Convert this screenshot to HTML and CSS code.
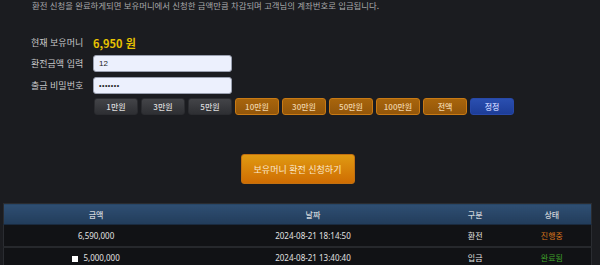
FILE: index.html
```html
<!DOCTYPE html>
<html lang="ko">
<head>
<meta charset="utf-8">
<link rel="stylesheet" href="styles.css">
</head>
<body>
<div class="page">
  <p class="notice">환전 신청을 완료하게되면 보유머니에서 신청한 금액만큼 차감되며 고객님의 계좌번호로 입금됩니다.</p>

  <div class="form">
    <div class="row balance-row">
      <span class="label">현재 보유머니</span>
      <span class="balance">6,950 원</span>
    </div>
    <div class="row">
      <span class="label">환전금액 입력</span>
      <div class="input">12</div>
    </div>
    <div class="row">
      <span class="label">출금 비밀번호</span>
      <div class="input pw">•••••••</div>
    </div>
    <div class="row">
      <span class="label"></span>
      <div class="chips">
        <button class="chip gray">1만원</button>
        <button class="chip gray">3만원</button>
        <button class="chip gray">5만원</button>
        <button class="chip orange">10만원</button>
        <button class="chip orange">30만원</button>
        <button class="chip orange">50만원</button>
        <button class="chip orange">100만원</button>
        <button class="chip orange">전액</button>
        <button class="chip blue">정정</button>
      </div>
    </div>
  </div>

  <div class="submit-wrap">
    <button class="submit">보유머니 환전 신청하기</button>
  </div>

  <table class="history">
    <colgroup>
      <col class="c1"><col class="c2"><col class="c3"><col class="c4">
    </colgroup>
    <thead>
      <tr><th>금액</th><th>날짜</th><th>구분</th><th>상태</th></tr>
    </thead>
    <tbody>
      <tr><td>6,590,000</td><td>2024-08-21 18:14:50</td><td>환전</td><td class="st-pending">진행중</td></tr>
      <tr><td><span class="check"></span>5,000,000</td><td>2024-08-21 13:40:40</td><td>입금</td><td class="st-done">완료됨</td></tr>
    </tbody>
  </table>
</div>
</body>
</html>
```

FILE: styles.css
```css
* { box-sizing: border-box; }
html, body { margin: 0; padding: 0; }
body {
  background: #1b1c20;
  font-family: "Noto Sans CJK KR", "Noto Sans", sans-serif;
  color: #c8c8c8;
  overflow: hidden;
}
.page {
  width: 600px;
  padding: 0 8px 0 3px;
}
.notice {
  margin: 0;
  padding: 0 0 0 29px;
  font-size: 8.4px;
  line-height: 11px;
  color: #a8a8aa;
}
.form {
  padding: 24px 0 0 28px;
  display: flex;
  flex-direction: column;
  gap: 5px;
}
.row {
  display: flex;
  align-items: center;
}
.balance-row { height: 15px; }
.label {
  width: 62px;
  font-size: 9px;
  color: #c8c8ca;
}
.balance {
  font-size: 11px;
  font-weight: 700;
  color: #e8c200;
}
.input {
  width: 139px;
  height: 17px;
  background: #ecf0fd;
  border: 1px solid #9aa0b0;
  border-radius: 3px;
  font-family: "Liberation Sans", sans-serif;
  font-size: 8px;
  color: #222;
  padding: 0 5px;
  line-height: 15px;
}
.input.pw { font-size: 7px; letter-spacing: 0.5px; }
.chips {
  display: flex;
  gap: 3px;
  margin-left: 1px;
  margin-top: -1px;
}
.chip {
  width: 44px;
  height: 17px;
  padding: 0;
  border-radius: 3px;
  font-family: "Noto Sans CJK KR", "Noto Sans", sans-serif;
  font-size: 8px;
  font-weight: 500;
  line-height: 15px;
}
.chip.gray {
  background: linear-gradient(#434448, #2e2f33);
  border: 1px solid #2a2b2f;
  color: #dcdcdc;
}
.chip.orange {
  background: linear-gradient(#a8650c, #93560a);
  border: 1px solid #c97a14;
  color: #f0d4a8;
}
.chip.blue {
  background: linear-gradient(#2a4fb0, #1d3d98);
  border: 1px solid #2848a8;
  color: #c8d4ff;
}
.submit-wrap {
  display: flex;
  justify-content: center;
  padding: 39px 0 0 0;
}
.submit {
  width: 114px;
  height: 30px;
  background: linear-gradient(#e09a12, #cf6d02);
  border: 1px solid #c27010;
  border-radius: 3px;
  color: #fbe8cc;
  font-family: "Noto Sans CJK KR", "Noto Sans", sans-serif;
  font-size: 9px;
  padding: 0;
}
.history {
  margin-top: 19px;
  width: 589px;
  border-collapse: collapse;
  border: 1px solid #2a2c31;
  font-size: 8px;
}
.c1 { width: 185px; }
.c2 { width: 250px; }
.c3 { width: 75px; }
.c4 { width: 79px; }
.history th {
  height: 21px;
  background: linear-gradient(#2f4f73, #223c5a);
  color: #d0d4da;
  font-weight: 500;
  padding: 0;
  border-bottom: 1px solid #1a2a3e;
}
.history td {
  height: 22px;
  background: #111215;
  color: #e2e2e2;
  text-align: center;
  padding: 0;
  border-bottom: 2px solid #26282c;
  font-family: "Noto Sans", "Noto Sans CJK KR", sans-serif;
}
.history td.st-pending { color: #d8731c; font-family: "Noto Sans CJK KR", sans-serif; }
.history td.st-done { color: #3fa02a; font-family: "Noto Sans CJK KR", sans-serif; }
.check {
  display: inline-block;
  width: 6px;
  height: 6px;
  background: #fff;
  margin-right: 5px;
  vertical-align: -0.5px;
}
```
